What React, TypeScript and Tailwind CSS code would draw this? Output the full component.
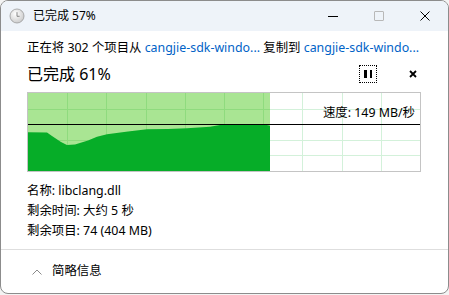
import React from 'react';

const font = { fontFamily: '"Noto Sans", "Noto Sans CJK SC", sans-serif' };

const areaPoints = [
  [0, 39.3], [19, 39.5], [24, 43], [33, 49], [39, 52], [47, 51.5], [60, 47.5], [69, 43.7],
  [79, 41.3], [100, 38.5], [119, 36.3], [140, 36], [159, 35.3], [182, 33.7], [192, 32],
  [200, 31.5], [237, 31.5], [242, 32.7], [242, 78], [0, 78],
];

const SpeedChart: React.FC = () => {
  const cols = [1, 2, 3, 4, 5, 6, 7, 8, 9].map((i) => i * 39.2);
  const rows = [1, 2, 3, 4].map((i) => i * 15.6);
  return (
    <div className="relative w-[394px] h-[80px] border border-[#c4c4c4]">
      <svg width="392" height="78" className="block" shapeRendering="crispEdges">
        <rect x="0" y="0" width="392" height="78" fill="#ffffff" />
        {cols.map((x) => (
          <line key={'w' + x} x1={Math.round(x) + 0.5} y1="0" x2={Math.round(x) + 0.5} y2="78" stroke="#d3f1da" />
        ))}
        {rows.map((y) => (
          <line key={'h' + y} x1="0" y1={Math.round(y) + 0.5} x2="392" y2={Math.round(y) + 0.5} stroke="#d3f1da" />
        ))}
        <rect x="0" y="0" width="242" height="78" fill="#a9e593" />
        {cols.filter((x) => x < 242).map((x) => (
          <line key={'g' + x} x1={Math.round(x) + 0.5} y1="0" x2={Math.round(x) + 0.5} y2="78" stroke="#8fdb7e" />
        ))}
        {rows.map((y) => (
          <line key={'gh' + y} x1="0" y1={Math.round(y) + 0.5} x2="242" y2={Math.round(y) + 0.5} stroke="#8fdb7e" />
        ))}
        <polygon points={areaPoints.map((p) => p.join(',')).join(' ')} fill="#06ad28" shapeRendering="auto" />
        <line x1="0" y1="31.5" x2="392" y2="31.5" stroke="#000000" />
      </svg>
      <span className="absolute right-[5px] top-[12px] text-[12.4px] leading-[16px] text-black">速度: 149 MB/秒</span>
    </div>
  );
};

export default function App() {
  return (
    <div className="w-[449px] h-[295px] bg-[#f3f3f3]" style={font}>
      <div className="w-[449px] h-[294px] bg-white border border-[#8c8c8c] rounded-[8px] overflow-hidden flex flex-col">
        <div className="h-[30px] bg-[#eef3f9] flex items-center shrink-0">
          <svg width="16" height="16" viewBox="0 0 16 16" className="ml-[8px]">
            <defs>
              <radialGradient id="clk" cx="40%" cy="35%" r="70%">
                <stop offset="0" stopColor="#ffffff" />
                <stop offset="1" stopColor="#c9c9c9" />
              </radialGradient>
            </defs>
            <circle cx="8" cy="8" r="7" fill="url(#clk)" stroke="#9a9a9a" strokeWidth="0.8" />
            <path d="M8 4.2V8.3H10.6" fill="none" stroke="#7a7a7a" strokeWidth="0.9" />
          </svg>
          <span className="ml-[8px] text-[12px] text-black">已完成 57%</span>
          <div className="ml-auto flex h-full">
            <div className="w-[46px] flex items-center justify-center">
              <div className="w-[10px] h-[1px] bg-black" />
            </div>
            <div className="w-[46px] flex items-center justify-center">
              <div className="w-[10px] h-[10px] border border-[#b8b8b8] rounded-[1px]" />
            </div>
            <div className="w-[46px] flex items-center justify-center">
              <svg width="10" height="10" viewBox="0 0 10 10">
                <path d="M0.5 0.5L9.5 9.5M9.5 0.5L0.5 9.5" stroke="#000" strokeWidth="1" />
              </svg>
            </div>
          </div>
        </div>

        <div className="pl-[26px] pt-[9px] flex flex-col">
          <div className="text-[12.4px] leading-[16px] text-black whitespace-nowrap">
            正在将 302 个项目从 <span className="text-[#0063c7]">cangjie-sdk-windo...</span> 复制到{' '}
            <span className="text-[#0063c7]">cangjie-sdk-windo...</span>
          </div>
          <div className="flex items-center h-[26px] mt-[5px]">
            <span className="text-[16px] text-black">已完成 61%</span>
            <div className="ml-auto mr-[32px] w-[18px] h-[18px] border border-dotted border-black flex items-center justify-center gap-[3px]">
              <div className="w-[2.5px] h-[8px] bg-black" />
              <div className="w-[2.5px] h-[8px] bg-black" />
            </div>
            <svg width="8" height="8" viewBox="0 0 8 8" className="mr-[31px]">
              <path d="M1 1L7 7M7 1L1 7" stroke="#000" strokeWidth="1.8" />
            </svg>
          </div>
          <div className="mt-[5px]">
            <SpeedChart />
          </div>
          <div className="mt-[9px] flex flex-col text-[12.4px] leading-[20px] text-black">
            <span>名称: libclang.dll</span>
            <span>剩余时间: 大约 5 秒</span>
            <span>剩余项目: 74 (404 MB)</span>
          </div>
        </div>

        <div className="mt-auto h-[44px] border-t border-[#dedede] flex items-center pl-[31px]">
          <svg width="10" height="6" viewBox="0 0 10 6">
            <path d="M0.5 5.5L5 1L9.5 5.5" fill="none" stroke="#8a8a8a" strokeWidth="1" />
          </svg>
          <span className="ml-[10px] text-[12.4px] text-black">简略信息</span>
        </div>
      </div>
    </div>
  );
}
